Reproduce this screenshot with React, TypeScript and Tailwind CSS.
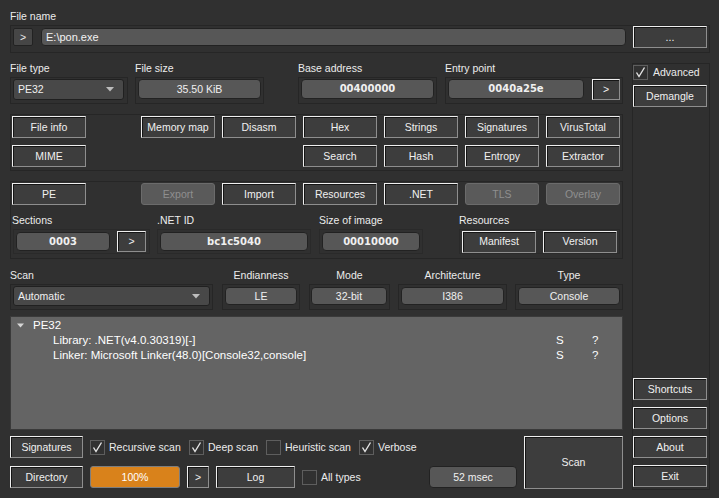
import React from "react";

type P = { className?: string; children?: React.ReactNode };

const Btn = ({ className = "", children }: P) => (
  <div
    className={`flex shrink-0 items-center justify-center border border-t-[#efefef] border-l-[#efefef] border-r-[#8e8e8e] border-b-[#8e8e8e] bg-[#3d3d3d] text-[#f0f0f0] leading-none shadow-[inset_1px_1px_0_#151515] ${className}`}
  >
    {children}
  </div>
);

const DisBtn = ({ className = "", children }: P) => (
  <div
    className={`flex shrink-0 items-center justify-center rounded-[3px] border border-[#6b6b6b] bg-[#5a5a5a] text-[#8f8f8f] leading-none ${className}`}
  >
    {children}
  </div>
);

const Field = ({ className = "", children }: P) => (
  <div
    className={`flex shrink-0 items-center justify-center rounded-[4px] border border-[#222222] bg-[#575757] text-[#f0f0f0] leading-none ${className}`}
  >
    {children}
  </div>
);

const HexField = ({ className = "", children }: P) => (
  <Field className={className}>
    <span className="font-['DejaVu_Sans',sans-serif] text-[10px] font-bold">{children}</span>
  </Field>
);

const Arrow = () => (
  <svg width="8" height="5" viewBox="0 0 8 5" className="shrink-0">
    <path d="M0 0 L8 0 L4 4.5 Z" fill="#bdbdbd" />
  </svg>
);

const Combo = ({ className = "", children }: P) => (
  <div
    className={`flex shrink-0 items-center justify-between rounded-[3px] border border-[#202020] bg-[#484848] pl-[4px] pr-[9px] text-[#f0f0f0] leading-none ${className}`}
  >
    <span>{children}</span>
    <Arrow />
  </div>
);

const Check = ({ checked }: { checked?: boolean }) => (
  <div className="flex h-[15px] w-[15px] shrink-0 items-center justify-center border border-[#5e5e5e] bg-[#313131]">
    {checked && (
      <svg width="13" height="13" viewBox="0 0 13 13">
        <path d="M2.5 6.5 L5 10.5 L10.5 1.5" fill="none" stroke="#e4e4e4" strokeWidth="1.4" />
      </svg>
    )}
  </div>
);

const CheckItem = ({ className = "", checked, label }: { className?: string; checked?: boolean; label: string }) => (
  <div className={`flex shrink-0 items-center ${className}`}>
    <Check checked={checked} />
    <span className="ml-[4px] leading-none">{label}</span>
  </div>
);

const Frame = ({ className = "", children }: P) => (
  <div className={`border border-[#262626] ${className}`}>{children}</div>
);

export default function App() {
  return (
    <div className="h-[498px] w-[719px] overflow-hidden bg-[#303030] font-['Liberation_Sans',Arial,sans-serif] text-[10.5px] text-[#ececec]">
      <div className="pl-[10px] pt-[9px]">
        <div className="h-[16px] leading-[14px]">File name</div>
        <Frame className="flex h-[28px] w-[700px] items-start">
          <div className="ml-[2px] mt-[2px] flex h-[18px] w-[20px] items-center justify-center rounded-[2px] border border-[#222222] bg-[#464646] leading-none">
            &gt;
          </div>
          <div className="ml-[8px] mt-[2px] flex h-[18px] w-[585px] items-center rounded-[4px] border border-[#222222] bg-[#575757] pl-[4px] text-[11px] leading-none text-[#f2f2f2]">
            E:\pon.exe
          </div>
          <Btn className="ml-[7px] h-[22px] w-[74px]">...</Btn>
        </Frame>

        <div className="mt-[9px] flex">
          {/* Left column */}
          <div className="flex w-[613px] flex-col">
            {/* Row A */}
            <div className="flex">
              <div className="flex w-[118px] flex-col">
                <div className="h-[15px] leading-[13px]">File type</div>
                <Frame className="h-[27px]">
                  <Combo className="ml-[2px] mt-[1px] h-[21px] w-[111px]">PE32</Combo>
                </Frame>
              </div>
              <div className="ml-[7px] flex w-[129px] flex-col">
                <div className="h-[15px] leading-[13px]">File size</div>
                <Frame className="h-[27px]">
                  <Field className="ml-[2px] mt-[1px] h-[20px] w-[123px]">35.50 KiB</Field>
                </Frame>
              </div>
              <div className="ml-[34px] flex w-[139px] flex-col">
                <div className="h-[15px] leading-[13px]">Base address</div>
                <Frame className="h-[27px]">
                  <HexField className="ml-[2px] mt-[1px] h-[20px] w-[133px]">00400000</HexField>
                </Frame>
              </div>
              <div className="ml-[8px] flex w-[178px] flex-col">
                <div className="h-[15px] leading-[13px]">Entry point</div>
                <Frame className="flex h-[27px] items-start">
                  <HexField className="ml-[2px] mt-[1px] h-[20px] w-[136px]">0040a25e</HexField>
                  <Btn className="ml-[8px] mt-[1px] h-[21px] w-[28px]">&gt;</Btn>
                </Frame>
              </div>
            </div>

            {/* Row B */}
            <Frame className="mt-[10px] h-[57px] pl-[1px] pt-[1px]">
              <div className="grid grid-cols-[74px_41px_74px_74px_74px_74px_74px_74px] grid-rows-[22px_22px] gap-x-[7px] gap-y-[7px]">
                <Btn className="col-start-1 row-start-1">File info</Btn>
                <Btn className="col-start-3 row-start-1">Memory map</Btn>
                <Btn className="col-start-4 row-start-1">Disasm</Btn>
                <Btn className="col-start-5 row-start-1">Hex</Btn>
                <Btn className="col-start-6 row-start-1">Strings</Btn>
                <Btn className="col-start-7 row-start-1">Signatures</Btn>
                <Btn className="col-start-8 row-start-1">VirusTotal</Btn>
                <Btn className="col-start-1 row-start-2">MIME</Btn>
                <Btn className="col-start-5 row-start-2">Search</Btn>
                <Btn className="col-start-6 row-start-2">Hash</Btn>
                <Btn className="col-start-7 row-start-2">Entropy</Btn>
                <Btn className="col-start-8 row-start-2">Extractor</Btn>
              </div>
            </Frame>

            {/* Row C */}
            <Frame className="mt-[10px] h-[78px] pl-[1px] pt-[1px]">
              <div className="grid grid-cols-[74px_41px_74px_74px_74px_74px_74px_74px] grid-rows-[22px] gap-x-[7px]">
                <Btn className="col-start-1">PE</Btn>
                <DisBtn className="col-start-3">Export</DisBtn>
                <Btn className="col-start-4">Import</Btn>
                <Btn className="col-start-5">Resources</Btn>
                <Btn className="col-start-6">.NET</Btn>
                <DisBtn className="col-start-7">TLS</DisBtn>
                <DisBtn className="col-start-8">Overlay</DisBtn>
              </div>
              <div className="mt-[8px] flex">
                <div className="flex w-[138px] flex-col">
                  <div className="h-[16px] leading-[15px]">Sections</div>
                  <div className="ml-[1px] flex h-[25px] items-center border border-[#2a2a2a]">
                    <HexField className="ml-[2px] h-[19px] w-[94px]">0003</HexField>
                    <Btn className="ml-[7px] h-[21px] w-[29px]">&gt;</Btn>
                  </div>
                </div>
                <div className="ml-[7px] flex w-[154px] flex-col">
                  <div className="h-[16px] leading-[15px]">.NET ID</div>
                  <div className="flex h-[25px] items-center border border-[#2a2a2a]">
                    <HexField className="ml-[2px] h-[19px] w-[148px]">bc1c5040</HexField>
                  </div>
                </div>
                <div className="ml-[8px] flex w-[104px] flex-col">
                  <div className="h-[16px] leading-[15px]">Size of image</div>
                  <div className="flex h-[25px] items-center border border-[#2a2a2a]">
                    <HexField className="ml-[2px] h-[19px] w-[98px]">00010000</HexField>
                  </div>
                </div>
                <div className="ml-[36px] flex w-[161px] flex-col">
                  <div className="h-[16px] leading-[15px]">Resources</div>
                  <div className="flex h-[25px] items-center border border-[#2a2a2a]">
                    <Btn className="ml-[2px] h-[22px] w-[74px]">Manifest</Btn>
                    <Btn className="ml-[7px] h-[22px] w-[74px]">Version</Btn>
                  </div>
                </div>
              </div>
            </Frame>

            {/* Row D */}
            <div className="mt-[9px] flex">
              <div className="flex w-[203px] flex-col">
                <div className="h-[16px] leading-[14px]">Scan</div>
                <Frame className="h-[26px]">
                  <Combo className="ml-[2px] mt-[1px] h-[20px] w-[197px]">Automatic</Combo>
                </Frame>
              </div>
              <div className="ml-[9px] flex w-[78px] flex-col">
                <div className="h-[16px] text-center leading-[14px]">Endianness</div>
                <Frame className="h-[26px]">
                  <Field className="ml-[2px] mt-[2px] h-[18px] w-[72px]">LE</Field>
                </Frame>
              </div>
              <div className="ml-[9px] flex w-[81px] flex-col">
                <div className="h-[16px] text-center leading-[14px]">Mode</div>
                <Frame className="h-[26px]">
                  <Field className="ml-[1px] mt-[2px] h-[18px] w-[76px]">32-bit</Field>
                </Frame>
              </div>
              <div className="ml-[8px] flex w-[109px] flex-col">
                <div className="h-[16px] text-center leading-[14px]">Architecture</div>
                <Frame className="h-[26px]">
                  <Field className="ml-[2px] mt-[2px] h-[18px] w-[103px]">I386</Field>
                </Frame>
              </div>
              <div className="ml-[8px] flex w-[108px] flex-col">
                <div className="h-[16px] text-center leading-[14px]">Type</div>
                <Frame className="h-[26px]">
                  <Field className="ml-[2px] mt-[2px] h-[18px] w-[102px]">Console</Field>
                </Frame>
              </div>
            </div>

            {/* Tree */}
            <div className="mt-[6px] h-[114px] w-[613px] border border-[#3a3a3a] bg-[#646464] pt-[1px] text-[11.5px] leading-[15px] text-white">
              <div className="flex items-center pl-[6px]">
                <svg width="7" height="5" viewBox="0 0 7 5" className="shrink-0">
                  <path d="M0 0.5 L7 0.5 L3.5 4.5 Z" fill="#d6d6d6" />
                </svg>
                <span className="ml-[9px]">PE32</span>
              </div>
              <div className="flex pl-[42px]">
                <span className="w-[503px]">Library: .NET(v4.0.30319)[-]</span>
                <span className="w-[36px]">S</span>
                <span>?</span>
              </div>
              <div className="flex pl-[42px]">
                <span className="w-[503px]">Linker: Microsoft Linker(48.0)[Console32,console]</span>
                <span className="w-[36px]">S</span>
                <span>?</span>
              </div>
            </div>

            {/* Bottom */}
            <div className="mt-[6px] flex">
              <div className="flex w-[507px] flex-col gap-[8px]">
                <div className="flex h-[22px] items-center">
                  <Btn className="h-[22px] w-[73px]">Signatures</Btn>
                  <CheckItem className="ml-[7px] w-[99px]" checked label="Recursive scan" />
                  <CheckItem className="w-[77px]" checked label="Deep scan" />
                  <CheckItem className="w-[93px]" label="Heuristic scan" />
                  <CheckItem checked label="Verbose" />
                </div>
                <div className="flex h-[22px] items-center">
                  <Btn className="h-[22px] w-[73px]">Directory</Btn>
                  <div className="ml-[7px] flex h-[22px] w-[90px] items-center justify-center rounded-[3px] border border-[#7e7e7e] bg-[#d9821b] leading-none text-white">
                    100%
                  </div>
                  <Btn className="ml-[7px] h-[22px] w-[22px]">&gt;</Btn>
                  <Btn className="ml-[7px] h-[22px] w-[79px]">Log</Btn>
                  <CheckItem className="ml-[7px]" label="All types" />
                  <Field className="ml-auto h-[22px] w-[88px]">52 msec</Field>
                </div>
              </div>
              <Btn className="ml-[7px] h-[53px] w-[99px]">Scan</Btn>
            </div>
          </div>

          {/* Right column */}
          <Frame className="ml-[9px] mt-[1px] flex h-[427px] w-[78px] flex-col pb-[2px]">
            <div className="mt-[1px] flex items-center">
              <Check checked />
              <span className="ml-[5px] leading-none">Advanced</span>
            </div>
            <Btn className="mt-[5px] h-[22px] w-[74px]">Demangle</Btn>
            <div className="flex-1" />
            <div className="flex flex-col gap-[7px]">
              <Btn className="h-[22px] w-[74px]">Shortcuts</Btn>
              <Btn className="h-[22px] w-[74px]">Options</Btn>
              <Btn className="h-[22px] w-[74px]">About</Btn>
              <Btn className="h-[22px] w-[74px]">Exit</Btn>
            </div>
          </Frame>
        </div>
      </div>
    </div>
  );
}
